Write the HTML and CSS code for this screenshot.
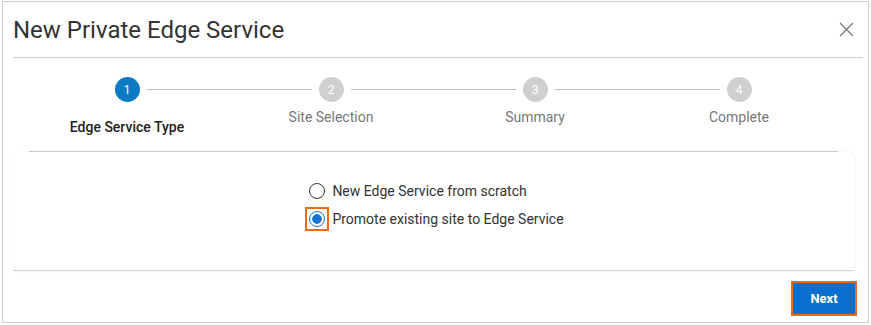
FILE: index.html
```html
<!DOCTYPE html>
<html lang="en">
    <head>
        <meta charset="UTF-8">
        <title>New Private Edge Service</title>
        <link rel="stylesheet" href="styles.css">
    </head>
    <body>
        <div class="modal">
            <div class="modal-header">
                <h1>New Private Edge Service</h1>
                <button class="close-btn" aria-label="Close">
                    <svg width="15" height="15" viewBox="0 0 15 15">
                        <path d="M1 1L14 14M14 1L1 14" stroke="#777" stroke-width="1.3" fill="none"/>
                    </svg>
                </button>
            </div>

            <!-- Wizard steps -->
            <div class="steps">
                <div class="step active">
                    <span class="step-num">1</span>
                    <span class="step-label">Edge Service Type</span>
                </div>
                <div class="step">
                    <span class="step-num">2</span>
                    <span class="step-label">Site Selection</span>
                </div>
                <div class="step">
                    <span class="step-num">3</span>
                    <span class="step-label">Summary</span>
                </div>
                <div class="step">
                    <span class="step-num">4</span>
                    <span class="step-label">Complete</span>
                </div>
            </div>
            <div class="steps-divider"></div>

            <div class="panel">
                <div class="radio-group">
                    <label class="radio-item">
                        <span class="radio-box"><input type="radio" name="mode" value="new"></span>
                        <span>New Edge Service from scratch</span>
                    </label>
                    <label class="radio-item focused">
                        <span class="radio-box"><input type="radio" name="mode" value="promote" checked></span>
                        <span>Promote existing site to Edge Service</span>
                    </label>
                </div>
            </div>

            <div class="modal-footer">
                <button class="next-btn">Next</button>
            </div>
        </div>
    </body>
</html>
```

FILE: styles.css
```css
body {
    margin: 0;
    font-family: Roboto, 'Liberation Sans', sans-serif;
    background: #fff;
    color: #333;
}
.modal {
    box-sizing: border-box;
    width: 867px;
    height: 322px;
    margin: 1px 0 0 2px;
    border: 1px solid #cfcfcf;
    background: #fff;
}
.modal-header {
    display: flex;
    align-items: center;
    justify-content: space-between;
    height: 55px;
    margin: 0 5px 0 10px;
    border-bottom: 1px solid #cfcfcf;
}
.modal-header h1 {
    margin: 0;
    font-size: 24px;
    font-weight: 400;
    color: #333;
}
.close-btn {
    background: none;
    border: none;
    padding: 0;
    margin-right: 9px;
    width: 15px;
    height: 15px;
    cursor: pointer;
}
.close-btn svg {
    display: block;
}
/* Wizard steps */
.steps {
    display: grid;
    grid-template-columns: repeat(4, 204px);
    margin-left: 22px;
    padding-top: 19px;
    height: 74px;
}
.step {
    position: relative;
    display: flex;
    flex-direction: column;
    align-items: center;
}
.step:not(:last-child)::after {
    content: "";
    position: absolute;
    top: 12px;
    left: calc(50% + 20px);
    width: 165px;
    height: 1px;
    background: #bdbdbd;
}
.step-num {
    display: flex;
    align-items: center;
    justify-content: center;
    width: 25px;
    height: 25px;
    border-radius: 50%;
    background: #cfcfcf;
    color: #fff;
    font-size: 12px;
}
.step-label {
    margin-top: 5px;
    font-size: 14px;
    line-height: 20px;
    color: #777;
}
.step.active .step-num {
    background: #0c7bc4;
}
.step.active .step-label {
    margin-top: 15px;
    font-weight: 500;
    color: #222;
}
.steps-divider {
    height: 1px;
    background: #cfcfcf;
    margin: 0 30px 0 26px;
}
/* Options panel */
.panel {
    margin: 0 14px 0 10px;
    padding: 25px 0 37px;
    border-bottom: 1px solid #cfcfcf;
    border-top-left-radius: 6px;
    border-top-right-radius: 6px;
    box-shadow: 1px 0 3px rgba(0,0,0,0.06);
    text-align: center;
}
.radio-group {
    display: inline-flex;
    flex-direction: column;
    text-align: left;
    margin-left: 4px;
}
.radio-item {
    display: flex;
    align-items: center;
    height: 28px;
    font-size: 14px;
    color: #333;
    cursor: pointer;
}
.radio-box {
    display: flex;
    align-items: center;
    justify-content: center;
    width: 20px;
    height: 20px;
    margin-right: 5px;
}
.radio-item input {
    appearance: none;
    -webkit-appearance: none;
    box-sizing: border-box;
    width: 16px;
    height: 16px;
    margin: 0;
    border: 1.5px solid #333;
    border-radius: 50%;
    background: #fff;
}
.radio-item input:checked {
    border-color: #1a73d9;
    background: radial-gradient(circle, #1a73d9 0 4.5px, #fff 5px);
}
.radio-item.focused .radio-box {
    outline: 2px solid #f06a12;
}
/* Footer */
.modal-footer {
    display: flex;
    justify-content: flex-end;
    padding: 10px 11px 0 0;
}
.next-btn {
    box-sizing: border-box;
    width: 66px;
    height: 35px;
    border: 2px solid #f06a12;
    background: #0b6fcf;
    color: #fff;
    font-family: Roboto, 'Liberation Sans', sans-serif;
    font-size: 13px;
    font-weight: 700;
    cursor: pointer;
}
```
